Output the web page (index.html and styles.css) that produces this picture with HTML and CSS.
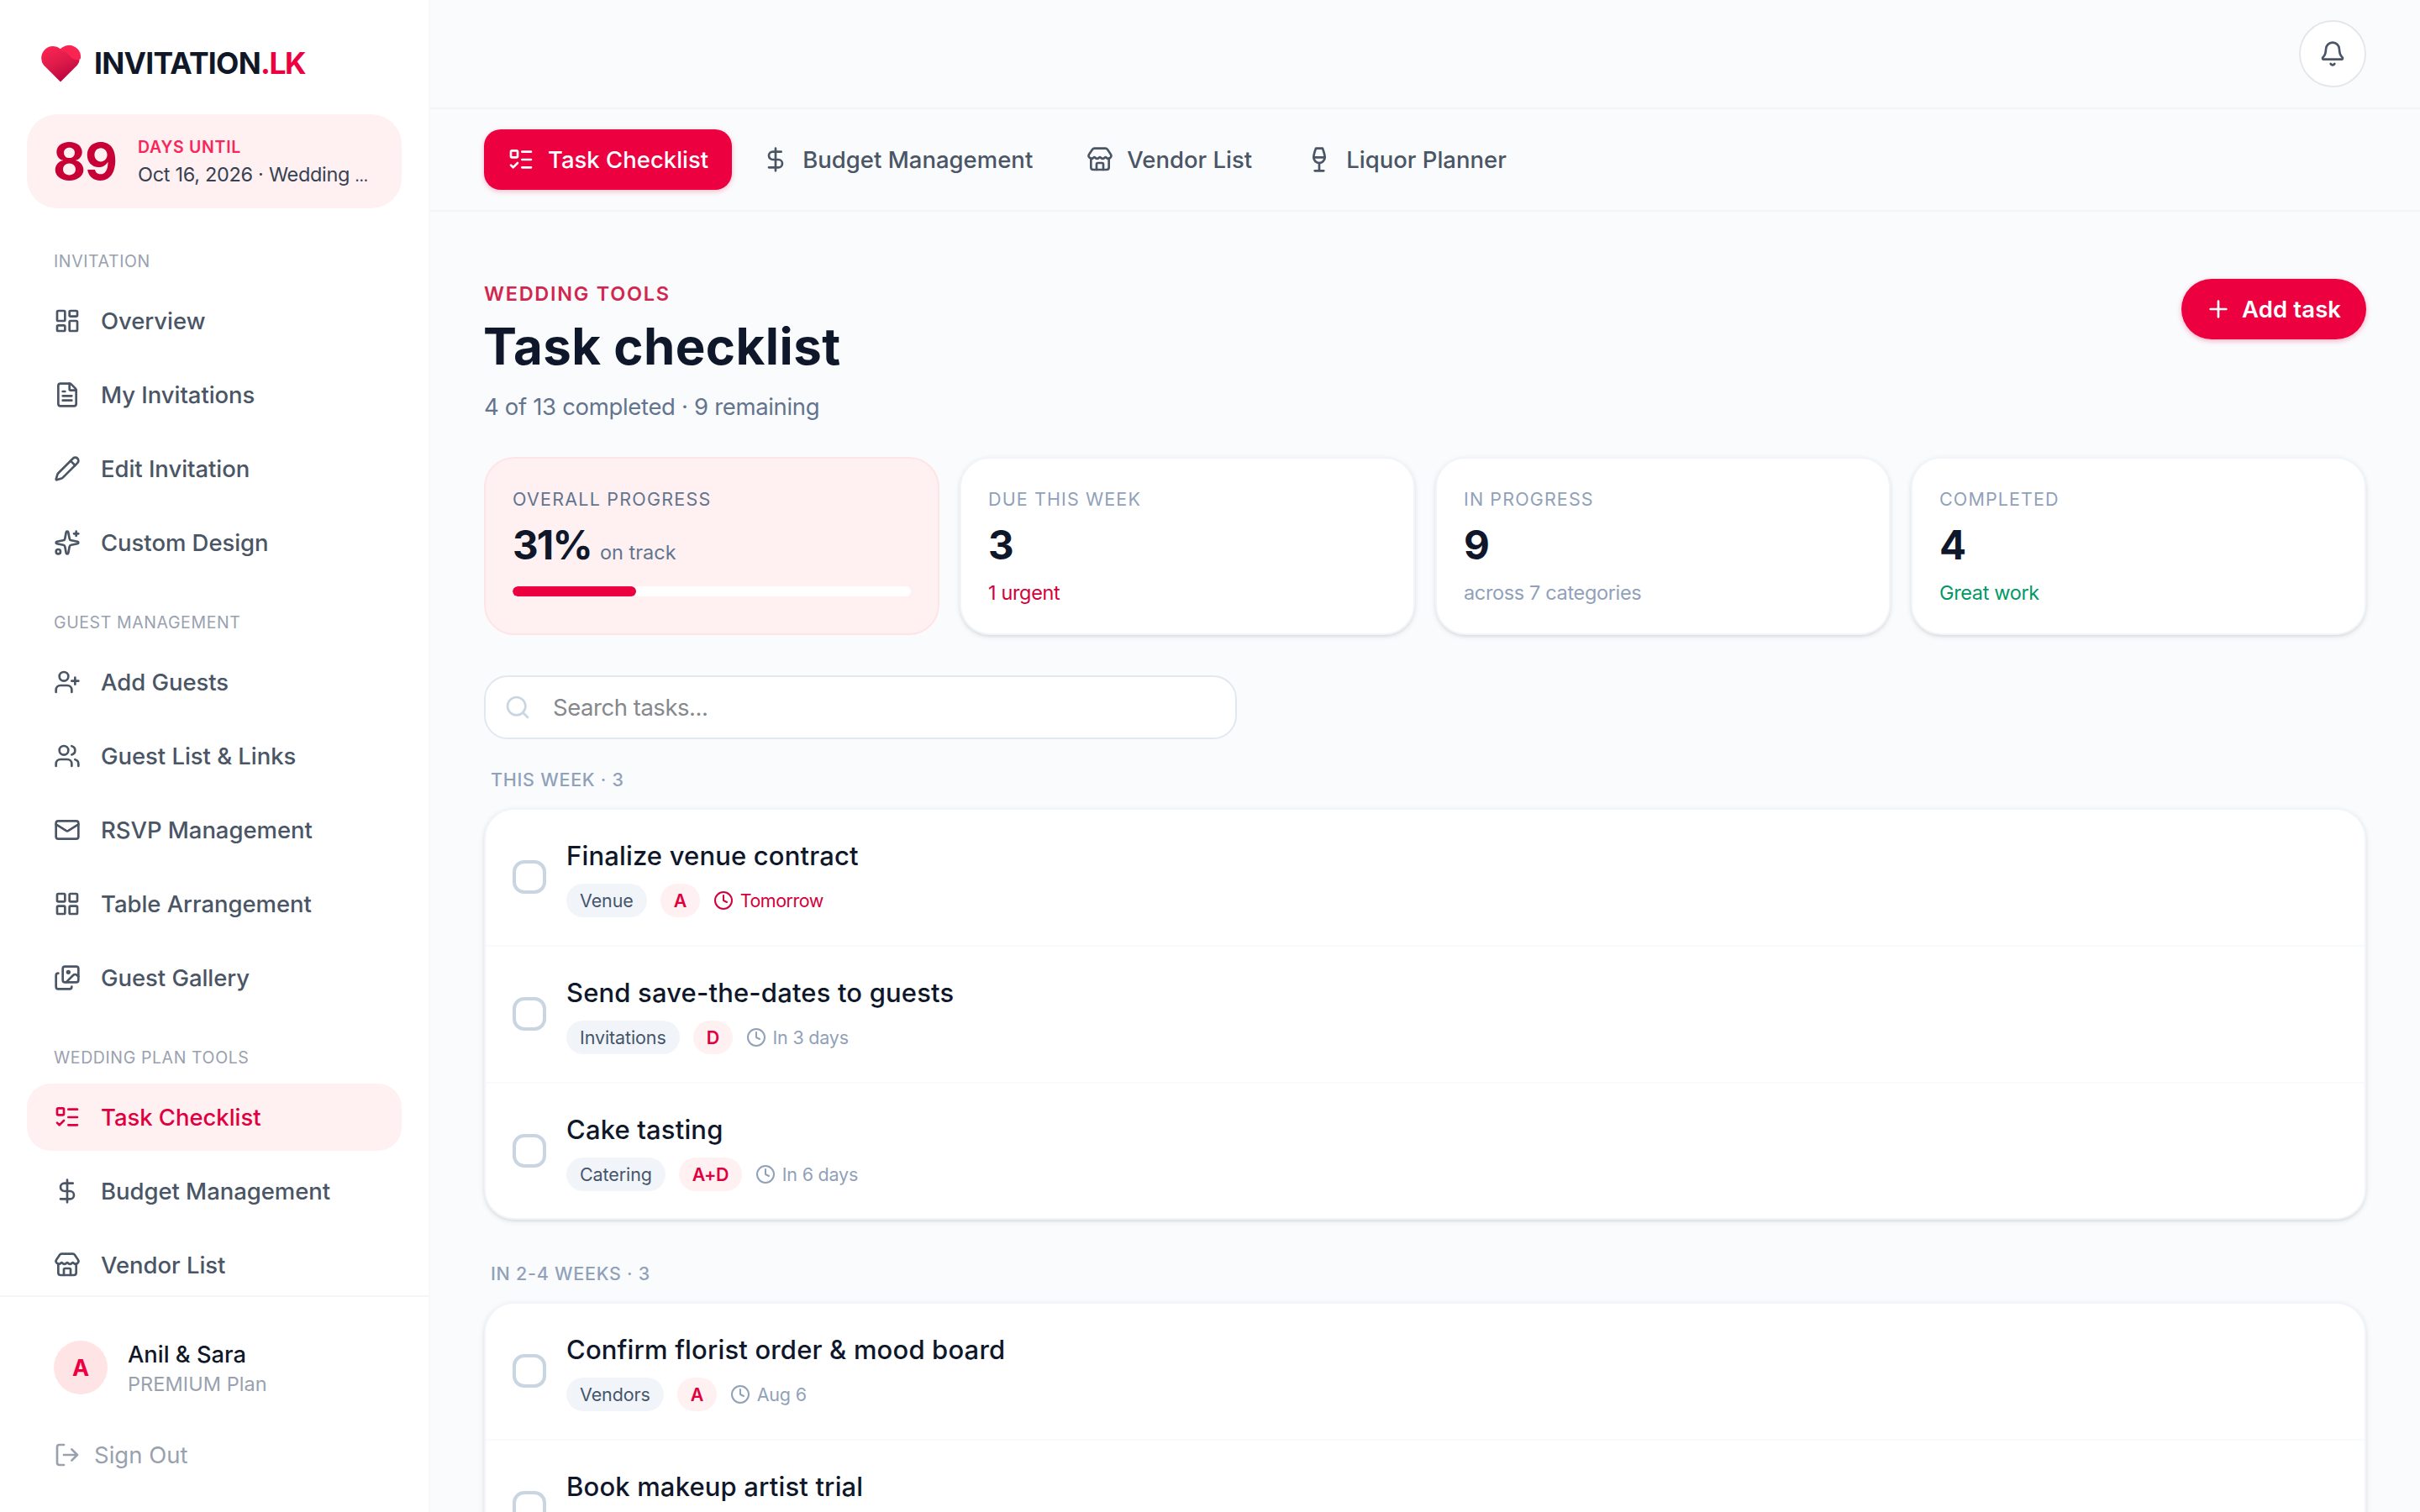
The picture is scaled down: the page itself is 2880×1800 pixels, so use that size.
FILE: index.html
```html
<!DOCTYPE html>
<html lang="en">
<head>
    <meta charset="UTF-8">
    <meta name="viewport" content="width=device-width, initial-scale=1.0">
    <title>Task Checklist - INVITATION.LK</title>
    <link rel="stylesheet" href="styles.css">
</head>
<body>
    <!-- icon sprite -->
    <svg class="sprite" aria-hidden="true">
        <symbol id="i-dashboard" viewBox="0 0 24 24"><rect width="7" height="9" x="3" y="3" rx="1"/><rect width="7" height="5" x="14" y="3" rx="1"/><rect width="7" height="9" x="14" y="12" rx="1"/><rect width="7" height="5" x="3" y="16" rx="1"/></symbol>
        <symbol id="i-file" viewBox="0 0 24 24"><path d="M6 22a2 2 0 0 1-2-2V4a2 2 0 0 1 2-2h8a2.4 2.4 0 0 1 1.704.706l3.588 3.588A2.4 2.4 0 0 1 20 8v12a2 2 0 0 1-2 2z"/><path d="M14 2v5a1 1 0 0 0 1 1h5M10 9H8M16 13H8M16 17H8"/></symbol>
        <symbol id="i-pencil" viewBox="0 0 24 24"><path d="M21.174 6.812a1 1 0 0 0-3.986-3.987L3.842 16.174a2 2 0 0 0-.5.83l-1.321 4.352a.5.5 0 0 0 .623.622l4.353-1.32a2 2 0 0 0 .83-.497z"/><path d="m15 5 4 4"/></symbol>
        <symbol id="i-sparkles" viewBox="0 0 24 24"><path d="M11.017 2.814a1 1 0 0 1 1.966 0l1.051 5.558a2 2 0 0 0 1.594 1.594l5.558 1.051a1 1 0 0 1 0 1.966l-5.558 1.051a2 2 0 0 0-1.594 1.594l-1.051 5.558a1 1 0 0 1-1.966 0l-1.051-5.558a2 2 0 0 0-1.594-1.594l-5.558-1.051a1 1 0 0 1 0-1.966l5.558-1.051a2 2 0 0 0 1.594-1.594z"/><path d="M20 2v4M22 4h-4"/><circle cx="4" cy="20" r="2"/></symbol>
        <symbol id="i-user-plus" viewBox="0 0 24 24"><path d="M16 21v-2a4 4 0 0 0-4-4H6a4 4 0 0 0-4 4v2"/><circle cx="9" cy="7" r="4"/><path d="M19 8v6M22 11h-6"/></symbol>
        <symbol id="i-users" viewBox="0 0 24 24"><path d="M16 21v-2a4 4 0 0 0-4-4H6a4 4 0 0 0-4 4v2"/><path d="M16 3.128a4 4 0 0 1 0 7.744M22 21v-2a4 4 0 0 0-3-3.87"/><circle cx="9" cy="7" r="4"/></symbol>
        <symbol id="i-mail" viewBox="0 0 24 24"><path d="m22 7-8.991 5.727a2 2 0 0 1-2.009 0L2 7"/><rect x="2" y="4" width="20" height="16" rx="2"/></symbol>
        <symbol id="i-grid" viewBox="0 0 24 24"><rect width="7" height="7" x="3" y="3" rx="1"/><rect width="7" height="7" x="14" y="3" rx="1"/><rect width="7" height="7" x="14" y="14" rx="1"/><rect width="7" height="7" x="3" y="14" rx="1"/></symbol>
        <symbol id="i-images" viewBox="0 0 24 24"><path d="m22 11-1.296-1.296a2.4 2.4 0 0 0-3.408 0L11 16"/><path d="M4 8a2 2 0 0 0-2 2v10a2 2 0 0 0 2 2h10a2 2 0 0 0 2-2"/><circle cx="13" cy="7" r="1" fill="currentColor"/><rect x="8" y="2" width="14" height="14" rx="2"/></symbol>
        <symbol id="i-todo" viewBox="0 0 24 24"><path d="M13 5h8M13 12h8M13 19h8M3 17l2 2 4-4"/><rect x="3" y="4" width="6" height="6" rx="1"/></symbol>
        <symbol id="i-dollar" viewBox="0 0 24 24"><path d="M12 2v20M17 5H9.5a3.5 3.5 0 0 0 0 7h5a3.5 3.5 0 0 1 0 7H6"/></symbol>
        <symbol id="i-store" viewBox="0 0 24 24"><path d="M15 21v-5a1 1 0 0 0-1-1h-4a1 1 0 0 0-1 1v5"/><path d="M17.774 10.31a1.12 1.12 0 0 0-1.549 0 2.5 2.5 0 0 1-3.451 0 1.12 1.12 0 0 0-1.548 0 2.5 2.5 0 0 1-3.452 0 1.12 1.12 0 0 0-1.549 0 2.5 2.5 0 0 1-3.77-3.248l2.889-4.184A2 2 0 0 1 7 2h10a2 2 0 0 1 1.653.873l2.895 4.192a2.5 2.5 0 0 1-3.774 3.244"/><path d="M4 10.95V19a2 2 0 0 0 2 2h12a2 2 0 0 0 2-2v-8.05"/></symbol>
        <symbol id="i-wine" viewBox="0 0 24 24"><path d="M8 22h8M7 10h10M12 15v7"/><path d="M12 15a5 5 0 0 0 5-5c0-2-.5-4-2-8H9c-1.5 4-2 6-2 8a5 5 0 0 0 5 5Z"/></symbol>
        <symbol id="i-bell" viewBox="0 0 24 24"><path d="M10.268 21a2 2 0 0 0 3.464 0"/><path d="M3.262 15.326A1 1 0 0 0 4 17h16a1 1 0 0 0 .74-1.673C19.41 13.956 18 12.499 18 8A6 6 0 0 0 6 8c0 4.499-1.411 5.956-2.738 7.326"/></symbol>
        <symbol id="i-plus" viewBox="0 0 24 24"><path d="M5 12h14M12 5v14"/></symbol>
        <symbol id="i-search" viewBox="0 0 24 24"><path d="m21 21-4.34-4.34"/><circle cx="11" cy="11" r="8"/></symbol>
        <symbol id="i-clock" viewBox="0 0 24 24"><circle cx="12" cy="12" r="10"/><path d="M12 6v6l4 2"/></symbol>
        <symbol id="i-logout" viewBox="0 0 24 24"><path d="m16 17 5-5-5-5M21 12H9M9 21H5a2 2 0 0 1-2-2V5a2 2 0 0 1 2-2h4"/></symbol>
    </svg>

    <div class="app">
        <aside class="sidebar">
            <a class="logo" href="#">
                <svg class="logo-heart" viewBox="0 0 48 45">
                    <defs>
                        <linearGradient id="heart" x1="0.2" y1="0" x2="0.7" y2="1">
                            <stop offset="0" stop-color="#fb2553"/>
                            <stop offset="0.5" stop-color="#dc1a49"/>
                            <stop offset="1" stop-color="#b8003c"/>
                        </linearGradient>
                    </defs>
                    <path fill="url(#heart)" d="M24 44.500 4 24.500A14 14 0 0 1 24 5.200 14 14 0 0 1 44 24.500Z"/>
                    <path fill="#fa2453" d="M26 3.600A13.800 13.800 0 0 1 47.800 17C44 19.500 38.500 18 35 13.500 32 10 28.500 8.500 26 8.300L24 5.200Z"/>
                </svg>
                <span class="logo-text">INVITATION<span>.LK</span></span>
            </a>

            <div class="countdown">
                <div class="countdown-num">89</div>
                <div class="countdown-info">
                    <div class="countdown-label">DAYS UNTIL</div>
                    <div class="countdown-date">Oct 16, 2026 · Wedding <span>…</span></div>
                </div>
            </div>

            <nav class="nav">
                <div class="nav-group">
                    <div class="nav-title">INVITATION</div>
                    <a class="nav-item" href="#"><svg class="icon"><use href="#i-dashboard"/></svg>Overview</a>
                    <a class="nav-item" href="#"><svg class="icon"><use href="#i-file"/></svg>My Invitations</a>
                    <a class="nav-item" href="#"><svg class="icon"><use href="#i-pencil"/></svg>Edit Invitation</a>
                    <a class="nav-item" href="#"><svg class="icon"><use href="#i-sparkles"/></svg>Custom Design</a>
                </div>
                <div class="nav-group">
                    <div class="nav-title">GUEST MANAGEMENT</div>
                    <a class="nav-item" href="#"><svg class="icon"><use href="#i-user-plus"/></svg>Add Guests</a>
                    <a class="nav-item" href="#"><svg class="icon"><use href="#i-users"/></svg>Guest List &amp; Links</a>
                    <a class="nav-item" href="#"><svg class="icon"><use href="#i-mail"/></svg>RSVP Management</a>
                    <a class="nav-item" href="#"><svg class="icon"><use href="#i-grid"/></svg>Table Arrangement</a>
                    <a class="nav-item" href="#"><svg class="icon"><use href="#i-images"/></svg>Guest Gallery</a>
                </div>
                <div class="nav-group">
                    <div class="nav-title">WEDDING PLAN TOOLS</div>
                    <a class="nav-item active" href="#"><svg class="icon"><use href="#i-todo"/></svg>Task Checklist</a>
                    <a class="nav-item" href="#"><svg class="icon"><use href="#i-dollar"/></svg>Budget Management</a>
                    <a class="nav-item" href="#"><svg class="icon"><use href="#i-store"/></svg>Vendor List</a>
                </div>
            </nav>

            <div class="sidebar-footer">
                <div class="user">
                    <div class="avatar">A</div>
                    <div>
                        <div class="user-name">Anil &amp; Sara</div>
                        <div class="user-plan">PREMIUM Plan</div>
                    </div>
                </div>
                <a class="sign-out" href="#"><svg class="icon"><use href="#i-logout"/></svg>Sign Out</a>
            </div>
        </aside>

        <main class="main">
            <header class="topbar">
                <button class="bell"><svg class="icon"><use href="#i-bell"/></svg></button>
            </header>

            <div class="tabs">
                <a class="tab active" href="#"><svg class="icon"><use href="#i-todo"/></svg>Task Checklist</a>
                <a class="tab" href="#"><svg class="icon"><use href="#i-dollar"/></svg>Budget Management</a>
                <a class="tab" href="#"><svg class="icon"><use href="#i-store"/></svg>Vendor List</a>
                <a class="tab" href="#"><svg class="icon"><use href="#i-wine"/></svg>Liquor Planner</a>
            </div>

            <div class="content">
                <div class="page-head">
                    <div>
                        <div class="eyebrow">WEDDING TOOLS</div>
                        <h1>Task checklist</h1>
                        <p class="subtitle">4 of 13 completed · 9 remaining</p>
                    </div>
                    <button class="add-btn"><svg class="icon"><use href="#i-plus"/></svg>Add task</button>
                </div>

                <div class="stats">
                    <div class="stat stat-progress">
                        <div class="stat-label">OVERALL PROGRESS</div>
                        <div class="stat-value">31%<span>on track</span></div>
                        <div class="bar"><div class="bar-fill" style="width: 31%"></div></div>
                    </div>
                    <div class="stat">
                        <div class="stat-label">DUE THIS WEEK</div>
                        <div class="stat-value">3</div>
                        <div class="stat-note urgent">1 urgent</div>
                    </div>
                    <div class="stat">
                        <div class="stat-label">IN PROGRESS</div>
                        <div class="stat-value">9</div>
                        <div class="stat-note">across 7 categories</div>
                    </div>
                    <div class="stat">
                        <div class="stat-label">COMPLETED</div>
                        <div class="stat-value">4</div>
                        <div class="stat-note good">Great work</div>
                    </div>
                </div>

                <div class="search">
                    <svg class="icon"><use href="#i-search"/></svg>
                    <input type="text" placeholder="Search tasks...">
                </div>

                <section class="group">
                    <h2>THIS WEEK · 3</h2>
                    <div class="task-list">
                        <div class="task">
                            <span class="checkbox"></span>
                            <div>
                                <div class="task-title">Finalize venue contract</div>
                                <div class="task-meta">
                                    <span class="chip">Venue</span>
                                    <span class="chip who">A</span>
                                    <span class="due soon"><svg class="icon"><use href="#i-clock"/></svg>Tomorrow</span>
                                </div>
                            </div>
                        </div>
                        <div class="task">
                            <span class="checkbox"></span>
                            <div>
                                <div class="task-title">Send save-the-dates to guests</div>
                                <div class="task-meta">
                                    <span class="chip">Invitations</span>
                                    <span class="chip who">D</span>
                                    <span class="due"><svg class="icon"><use href="#i-clock"/></svg>In 3 days</span>
                                </div>
                            </div>
                        </div>
                        <div class="task">
                            <span class="checkbox"></span>
                            <div>
                                <div class="task-title">Cake tasting</div>
                                <div class="task-meta">
                                    <span class="chip">Catering</span>
                                    <span class="chip who">A+D</span>
                                    <span class="due"><svg class="icon"><use href="#i-clock"/></svg>In 6 days</span>
                                </div>
                            </div>
                        </div>
                    </div>
                </section>

                <section class="group">
                    <h2>IN 2-4 WEEKS · 3</h2>
                    <div class="task-list">
                        <div class="task">
                            <span class="checkbox"></span>
                            <div>
                                <div class="task-title">Confirm florist order &amp; mood board</div>
                                <div class="task-meta">
                                    <span class="chip">Vendors</span>
                                    <span class="chip who">A</span>
                                    <span class="due"><svg class="icon"><use href="#i-clock"/></svg>Aug 6</span>
                                </div>
                            </div>
                        </div>
                        <div class="task">
                            <span class="checkbox"></span>
                            <div>
                                <div class="task-title">Book makeup artist trial</div>
                                <div class="task-meta"></div>
                            </div>
                        </div>
                    </div>
                </section>
            </div>
        </main>
    </div>
</body>
</html>
```
FILE: styles.css
```css
* {
    margin: 0;
    padding: 0;
    box-sizing: border-box;
}

body {
    font-family: Inter, "Liberation Sans", sans-serif;
    font-size: 27.5px;
    color: #0f172b;
    background: #fafbfd;
}

a {
    color: inherit;
    text-decoration: none;
}

button,
input {
    font: inherit;
    border: none;
    outline: none;
}

.sprite {
    display: none;
}

.icon {
    width: 32px;
    height: 32px;
    flex-shrink: 0;
    fill: none;
    stroke: currentColor;
    stroke-width: 2;
    stroke-linecap: round;
    stroke-linejoin: round;
}

.app {
    display: flex;
    height: 100vh;
    overflow: hidden;
}

/* sidebar */
.sidebar {
    display: flex;
    flex-direction: column;
    width: 512px;
    flex-shrink: 0;
    background: #fff;
    border-right: 2px solid #f6f8fa;
}

.logo {
    display: flex;
    align-items: center;
    gap: 16px;
    height: 102px;
    margin: 24px 48px 10px;
}

.logo-heart {
    width: 48px;
    height: 45px;
}

.logo-text {
    font-size: 35.5px;
    font-weight: 700;
    letter-spacing: -0.021em;
    color: #101828;
}

.logo-text span {
    color: #ec003f;
    letter-spacing: -0.04em;
}

.countdown {
    display: flex;
    align-items: center;
    gap: 24px;
    height: 112px;
    margin: 0 32px;
    padding: 0 32px 1px 31px;
    border-radius: 36px;
    background: #fff1f2;
}

.countdown-num {
    width: 77px;
    font-size: 60px;
    font-weight: 700;
    letter-spacing: -0.018em;
    color: #c70036;
}

.countdown-info {
    padding-top: 2px;
    line-height: 32px;
    white-space: nowrap;
}

.countdown-label {
    font-size: 19.5px;
    font-weight: 600;
    letter-spacing: 0.036em;
    color: #f8265a;
}

.countdown-date {
    font-size: 23.5px;
    line-height: 34px;
    letter-spacing: -0.013em;
    color: #364153;
}

.countdown-date span {
    font-size: 17px;
    font-weight: 500;
}

.nav {
    flex: 1;
    min-height: 0;
    overflow: hidden;
    padding: 48px 32px 0;
}

.nav-group {
    display: flex;
    flex-direction: column;
    gap: 8px;
    margin-bottom: 40px;
}

.nav-title {
    margin-bottom: 8px;
    padding-left: 32px;
    font-size: 19.5px;
    line-height: 30px;
    letter-spacing: 0.031em;
    color: #99a1af;
}

.nav-item {
    display: flex;
    align-items: center;
    gap: 24px;
    height: 80px;
    padding: 0 32px;
    border-radius: 28px;
    font-weight: 500;
    letter-spacing: -0.002em;
    color: #4a5565;
}

.nav-item.active {
    color: #e0003f;
    background: #fff1f2;
}

.sidebar-footer {
    height: 258px;
    padding: 52px 64px 0;
    border-top: 2px solid #f3f6f8;
}

.user {
    display: flex;
    align-items: center;
    gap: 24px;
    height: 64px;
}

.avatar {
    display: flex;
    align-items: center;
    justify-content: center;
    width: 64px;
    height: 64px;
    border-radius: 50%;
    font-size: 27px;
    font-weight: 700;
    color: #ec003f;
    background: #ffe4e6;
}

.user-name {
    padding-top: 3px;
    font-size: 27.3px;
    font-weight: 500;
    line-height: 36px;
    color: #101828;
}

.user-plan {
    font-size: 23.5px;
    line-height: 34px;
    letter-spacing: 0.003em;
    color: #99a1af;
}

.sign-out {
    display: flex;
    align-items: center;
    gap: 16px;
    height: 40px;
    margin-top: 52px;
    color: #99a1af;
}

/* main column */
.main {
    flex: 1;
    min-width: 0;
}

.topbar {
    display: flex;
    align-items: center;
    justify-content: flex-end;
    height: 130px;
    padding: 0 64px;
    border-bottom: 2px solid #f3f4f6;
}

.bell {
    display: flex;
    align-items: center;
    justify-content: center;
    width: 80px;
    height: 80px;
    border: 2px solid #e5e7eb;
    border-radius: 50%;
    color: #4a5565;
    background: #fff;
}

.tabs {
    display: flex;
    gap: 8px;
    height: 122px;
    padding: 24px 64px;
    border-bottom: 2px solid #f3f4f6;
}

.tab {
    display: flex;
    align-items: center;
    gap: 16px;
    height: 72px;
    padding: 0 28px;
    border-radius: 20px;
    font-weight: 500;
    color: #4a5565;
}

.tab.active {
    color: #fff;
    background: #ec003f;
    box-shadow: 0 2px 6px rgba(236, 0, 63, 0.25);
}

.content {
    padding: 80px 64px 0;
}

.page-head {
    display: flex;
    justify-content: space-between;
    align-items: flex-start;
    margin-bottom: 40px;
}

.eyebrow {
    font-size: 23.5px;
    font-weight: 600;
    line-height: 36px;
    letter-spacing: 0.073em;
    color: #d2264f;
}

h1 {
    margin: 8px 0 0 -1px;
    font-size: 60px;
    font-weight: 700;
    line-height: 72px;
    letter-spacing: 0.007em;
}

.subtitle {
    margin-top: 16px;
    line-height: 40px;
    letter-spacing: -0.012em;
    color: #62748e;
}

.add-btn {
    display: flex;
    align-items: center;
    gap: 12px;
    width: 220px;
    height: 72px;
    padding: 0 28px;
    border-radius: 36px;
    font-weight: 600;
    letter-spacing: 0.004em;
    white-space: nowrap;
    color: #fff;
    background: #ec003f;
    box-shadow: 0 2px 6px rgba(236, 0, 63, 0.3);
}

.stats {
    display: grid;
    grid-template-columns: repeat(4, 1fr);
    gap: 24px;
}

.stat {
    height: 212px;
    padding: 32px;
    border: 2px solid #f1f5f9;
    border-radius: 36px;
    background: #fff;
    box-shadow: 0 2px 6px rgba(0, 0, 0, 0.1), 0 2px 4px -2px rgba(0, 0, 0, 0.1);
}

.stat-progress {
    border-color: #ffe4e6;
    background: #fff1f2;
    box-shadow: none;
}

.stat-label {
    font-size: 21.5px;
    line-height: 32px;
    letter-spacing: 0.052em;
    color: #90a1b9;
}

.stat-progress .stat-label {
    letter-spacing: 0.057em;
    color: #62748e;
}

.stat-value {
    height: 56px;
    margin-top: 11px;
    font-size: 47.5px;
    font-weight: 700;
    line-height: 56px;
    letter-spacing: -0.038em;
}

.stat-value span {
    margin-left: 10px;
    font-size: 23.5px;
    font-weight: 400;
    letter-spacing: 0;
    color: #62748e;
}

.stat-note {
    margin-top: 13px;
    font-size: 23.5px;
    line-height: 32px;
    letter-spacing: -0.015em;
    color: #90a1b9;
}

.stat-note.urgent {
    color: #d4003b;
}

.stat-note.good {
    color: #009966;
}

.bar {
    height: 12px;
    margin-top: 21px;
    border-radius: 6px;
    background: #fff;
    overflow: hidden;
}

.bar-fill {
    height: 100%;
    border-radius: 6px;
    background: #ec003f;
}

.search {
    display: flex;
    align-items: center;
    gap: 26px;
    width: 896px;
    height: 76px;
    margin-top: 48px;
    padding: 0 22px;
    border: 2px solid #e2e8f0;
    border-radius: 28px;
    color: #cad5e2;
    background: #fff;
}

.search input {
    flex: 1;
    letter-spacing: -0.017em;
    background: none;
}

.search input::placeholder {
    color: #85888d;
}

/* task groups */
.group {
    margin-top: 32px;
}

.group + .group {
    margin-top: 48px;
}

.group h2 {
    margin-bottom: 18px;
    padding-left: 8px;
    font-size: 21.5px;
    font-weight: 500;
    line-height: 32px;
    letter-spacing: 0.034em;
    color: #90a1b9;
}

.task-list {
    border: 2px solid #f1f5f9;
    border-radius: 36px;
    background: #fff;
    box-shadow: 0 2px 6px rgba(0, 0, 0, 0.1), 0 2px 4px -2px rgba(0, 0, 0, 0.1);
}

.task {
    display: flex;
    align-items: center;
    gap: 24px;
    height: 163px;
    padding: 0 32px 1px;
    border-bottom: 2px solid #f8fafc;
}

.task:last-child {
    height: 160px;
    padding-bottom: 0;
    border-bottom: none;
}

.checkbox {
    width: 40px;
    height: 40px;
    border: 4px solid #cad5e2;
    border-radius: 14px;
}

.task-title {
    font-size: 31px;
    font-weight: 500;
    line-height: 46px;
    letter-spacing: 0.005em;
}

.task-meta {
    display: flex;
    align-items: center;
    gap: 16px;
    height: 40px;
    margin-top: 10px;
}

.chip {
    height: 40px;
    padding: 0 16px;
    border-radius: 20px;
    font-size: 21.5px;
    line-height: 40px;
    letter-spacing: -0.005em;
    color: #45556c;
    background: #f1f5f9;
}

.chip.who {
    font-weight: 600;
    letter-spacing: -0.03em;
    color: #e0003f;
    background: #fff1f2;
}

.due {
    display: flex;
    align-items: center;
    gap: 8px;
    font-size: 21.5px;
    letter-spacing: -0.01em;
    color: #90a1b9;
}

.due .icon {
    width: 24px;
    height: 24px;
}

.due.soon {
    letter-spacing: -0.023em;
    color: #d4003b;
}
```
